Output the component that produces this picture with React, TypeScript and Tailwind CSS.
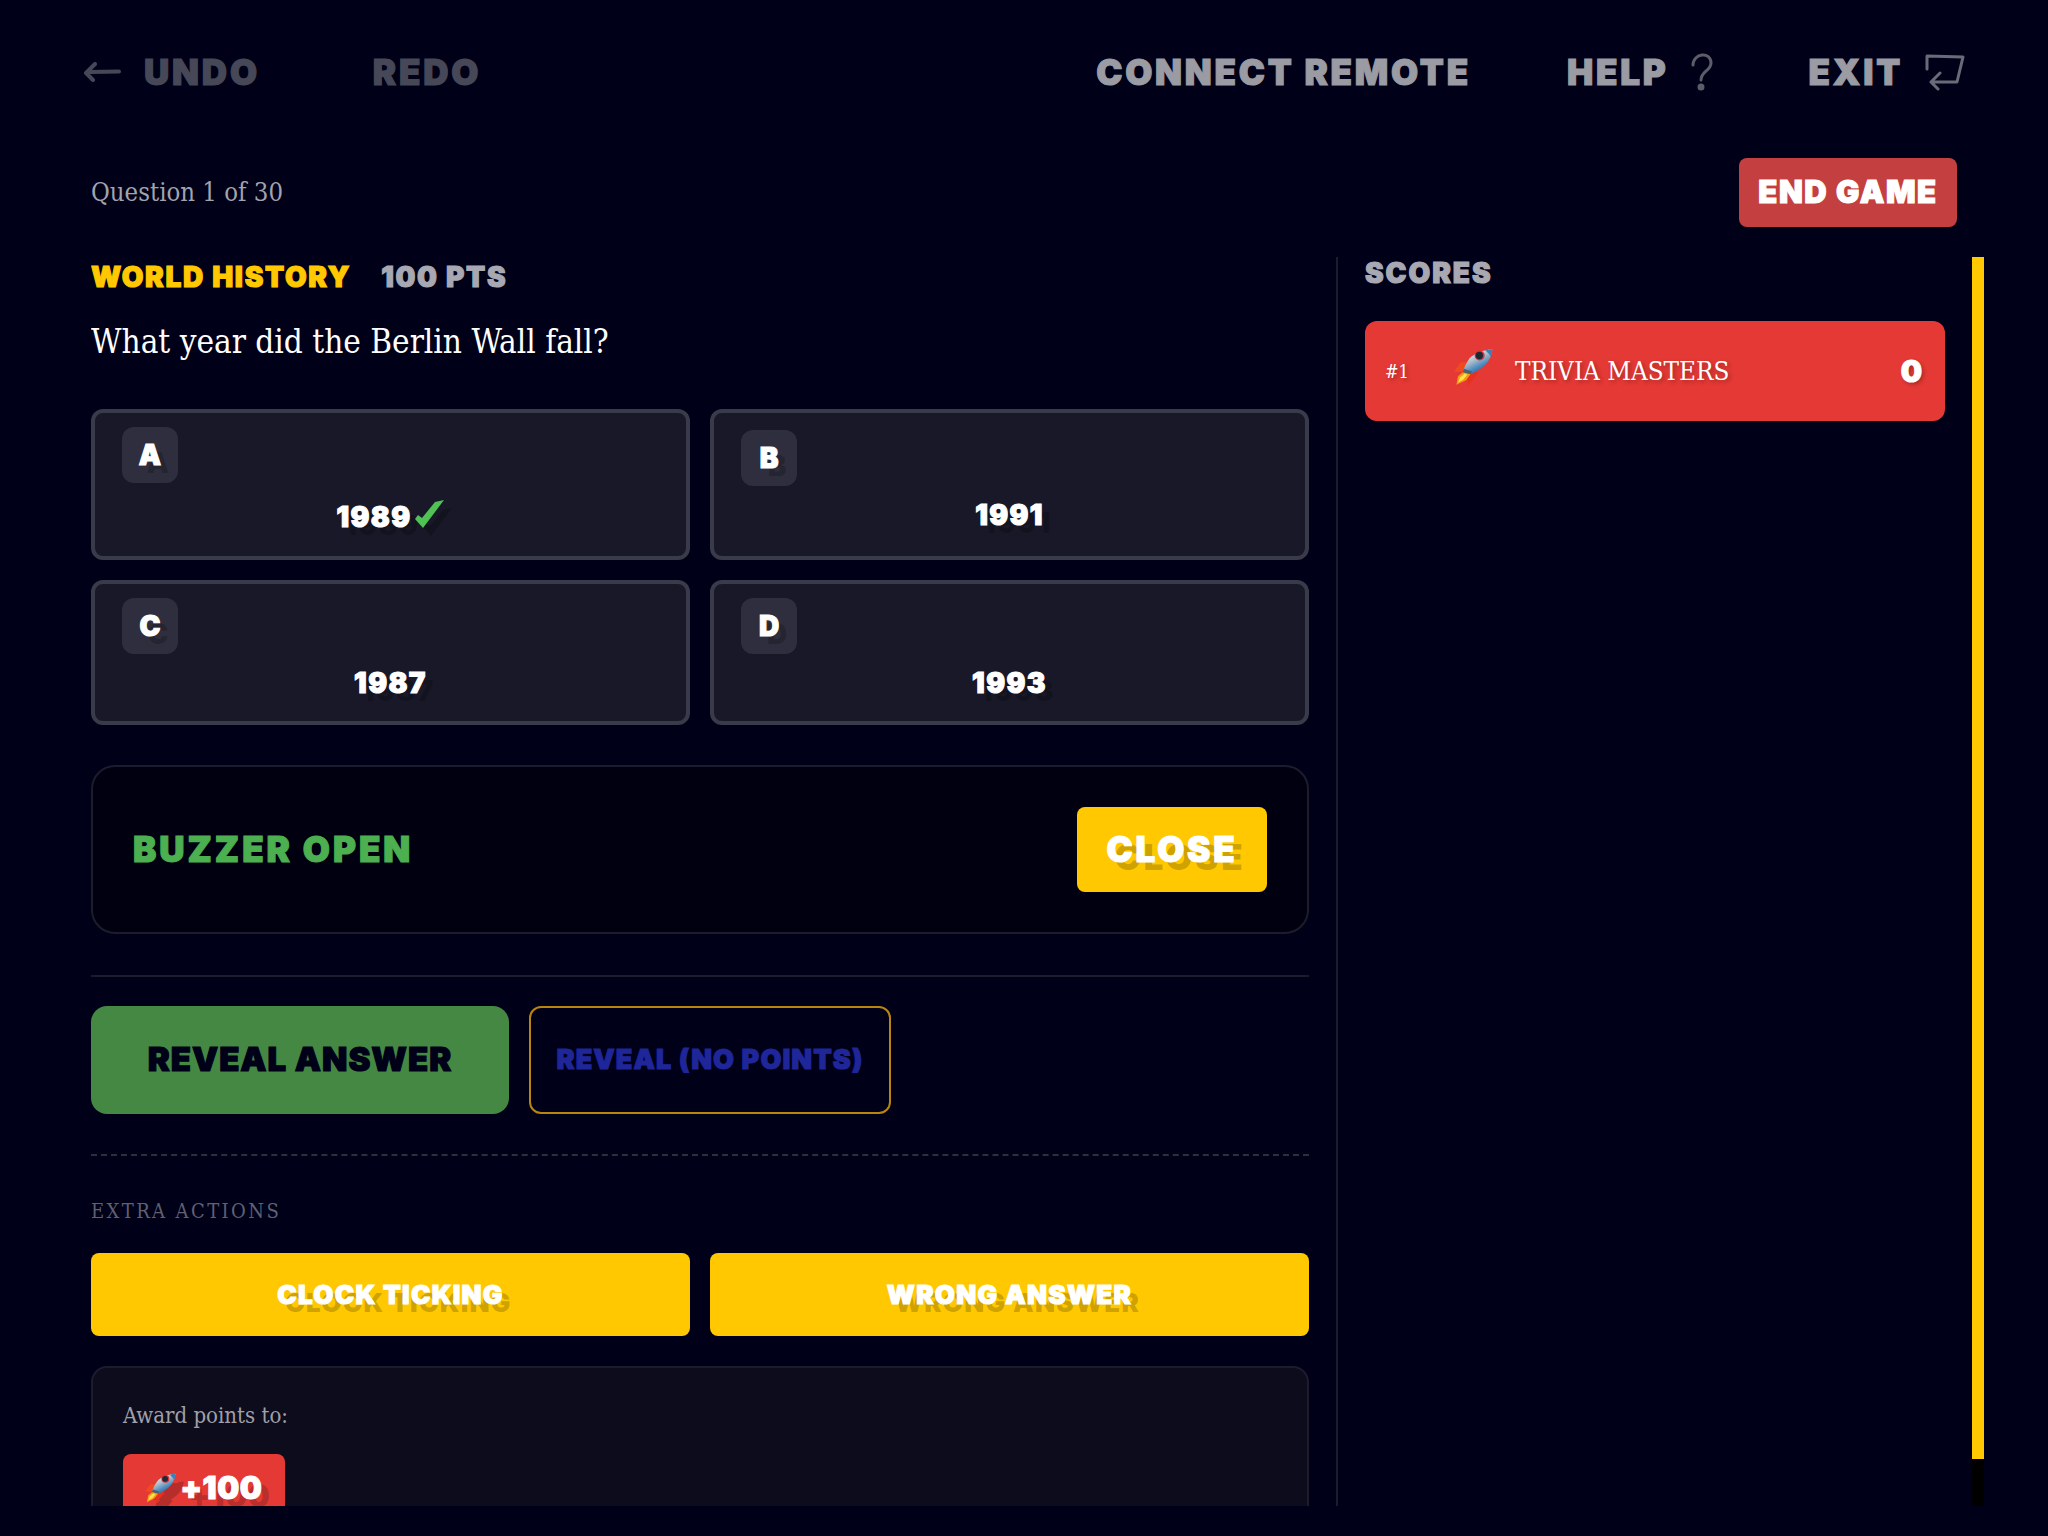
import React from "react";

const disp = "font-['Inter','Liberation_Sans',sans-serif] font-black [-webkit-text-stroke:1.1px_currentColor]";
const slab = "font-['DejaVu_Serif','Liberation_Serif',serif] [font-stretch:condensed]";
const softShadow = "[text-shadow:8px_8px_0_rgba(0,0,0,0.2)]";

function Rocket({ className }: { className: string }) {
  return (
    <svg viewBox="0 0 117 113" className={className}>
      <defs>
        <linearGradient id="rb" x1="0.25" y1="0.1" x2="0.75" y2="0.9">
          <stop offset="0" stopColor="#eef1f3" />
          <stop offset="0.4" stopColor="#a9bccb" />
          <stop offset="0.7" stopColor="#4f8cc0" />
          <stop offset="1" stopColor="#235f99" />
        </linearGradient>
      </defs>
      <path d="M0 70 L20 42 L45 42 L30 72 Z" fill="#f04a20" />
      <path d="M42 112 L74 74 L54 66 L40 90 Z" fill="#e8321f" />
      <path d="M7 110 L12 84 L32 68 L54 72 L36 96 Z" fill="#f59a14" />
      <path d="M12 104 L18 88 L32 76 L40 80 L28 94 Z" fill="#ffe04a" />
      <path d="M115 3 C90 4 60 16 47 30 C38 42 30 58 27 70 L52 76 C70 72 95 50 102 40 C110 28 114 14 115 3 Z" fill="url(#rb)" />
      <path d="M30 62 L54 70 L50 78 L26 72 Z" fill="#51606c" />
      <circle cx="77" cy="22" r="15" fill="#d8323a" />
      <circle cx="76" cy="22" r="11" fill="#1e2a33" />
      <path d="M115 3 C108 3 100 5 94 7 C100 12 106 18 110 25 C113 18 115 10 115 3 Z" fill="#3d80b8" />
    </svg>
  );
}

function Check() {
  return (
    <svg viewBox="0 0 31 30" className="w-[31px] h-[30px] ml-[2px] -mt-[6px] drop-shadow-[8px_8px_0_rgba(0,0,0,0.2)]">
      <path d="M1 20 L9 29 L30 1 L21 3 L8 19 L4 16 Z" fill="#4fc253" />
    </svg>
  );
}

function Answer({ l, t, check, className }: { l: string; t: string; check?: boolean; className: string }) {
  return (
    <div className={`flex flex-col border-4 border-[#3a3b4a] bg-[#181828] rounded-xl px-[27px] text-white ${className}`}>
      <div className="w-14 h-14 rounded-xl bg-[#2e2e3e] flex items-center justify-center">
        <span className={`${disp} text-[28px] leading-none ${softShadow}`}>{l}</span>
      </div>
      <div className={`${disp} text-[28px] tracking-[0.05em] leading-[34px] ${check ? "mt-[17px]" : "mt-[12px]"} text-center flex justify-center items-center ${softShadow}`}>
        <span>{t}</span>
        {check && <Check />}
      </div>
    </div>
  );
}

function Yellow({ children, className }: { children: React.ReactNode; className: string }) {
  return (
    <button className={`bg-[#ffc800] rounded-lg text-white ${disp} ${softShadow} ${className}`}>{children}</button>
  );
}

export default function App() {
  return (
    <div className={`w-[2048px] h-[1536px] bg-[#000018] overflow-hidden pl-[84px] pt-[50px] ${slab}`}>
      <header className={`h-11 mr-[83px] flex items-center ${disp} text-[35px] tracking-[0.08em] leading-none`}>
        <svg viewBox="0 0 38 20" className="w-[38px] h-5 mr-[22px] text-[#474857]" fill="none" stroke="currentColor" strokeWidth="4" strokeLinecap="round" strokeLinejoin="round">
          <path d="M6 10 L35 9.5 M11 2 L2 11 L9 18" />
        </svg>
        <span className="text-[#474857]">UNDO</span>
        <span className="text-[#474857] ml-[113px]">REDO</span>
        <span className="text-[#9a9ba3] ml-auto">CONNECT REMOTE</span>
        <span className="text-[#9a9ba3] ml-[96px]">HELP</span>
        <svg viewBox="0 0 22 38" className="w-[22px] h-[38px] ml-[22px] text-[#5c5d68]" fill="none" stroke="currentColor" strokeWidth="3" strokeLinecap="round" strokeLinejoin="round">
          <path d="M2 12 C2 0 20 -2 20 10 C20 18 10 18 10 27" />
          <circle cx="10" cy="34" r="2" fill="currentColor" />
        </svg>
        <span className="text-[#9a9ba3] ml-[96px]">EXIT</span>
        <svg viewBox="0 0 40 38" className="w-10 h-[38px] ml-[22px] text-[#6a6b78]" fill="none" stroke="currentColor" strokeWidth="3" strokeLinecap="round" strokeLinejoin="round">
          <path d="M2 16 L2 3 L38 4 L32 29 L7 29 M15 20 L6 29 L13 36" />
        </svg>
      </header>

      <div className="mt-[64px] ml-[7px] mr-[91px] h-[69px] flex items-center justify-between">
        <span className="text-[25.5px] text-[#a2a3ad]">Question 1 of 30</span>
        <button className={`w-[218px] h-[69px] rounded-lg bg-[#c44040] text-white ${disp} text-[31px] tracking-[0.05em]`}>END GAME</button>
      </div>

      <main className="mt-[30px] ml-[7px] h-[1249px] flex">
        <section className="w-[1218px] shrink-0 overflow-hidden">
          <div className={`${disp} text-[28px] tracking-[0.06em] leading-10 flex gap-[30px]`}>
            <span className="text-[#ffc800]">WORLD HISTORY</span>
            <span className="text-[#a8a8b2]">100 PTS</span>
          </div>
          <h1 className="text-[33px] leading-[44px] text-white mt-[23px]">What year did the Berlin Wall fall?</h1>
          <div className="mt-[45px] grid grid-cols-2 gap-x-5 gap-y-5">
            <Answer l="A" t="1989" check className="h-[151px] pt-[14px]" />
            <Answer l="B" t="1991" className="h-[151px] pt-[17px]" />
            <Answer l="C" t="1987" className="h-[145px] pt-[14px]" />
            <Answer l="D" t="1993" className="h-[145px] pt-[14px]" />
          </div>
          <div className="mt-[40px] h-[169px] border-2 border-[#1c1c2c] rounded-3xl bg-[#000010] px-10 flex items-center justify-between">
            <span className={`${disp} text-[35px] tracking-[0.085em] text-[#4caf50]`}>BUZZER OPEN</span>
            <Yellow className="w-[190px] h-[85px] text-[35px] tracking-[0.08em]">CLOSE</Yellow>
          </div>
          <div className="mt-[41px] border-t-2 border-[#1c1c2c]" />
          <div className="mt-[29px] flex gap-5">
            <button className={`w-[418px] h-[108px] rounded-2xl bg-[#458844] text-[#000018] ${disp} text-[33px] tracking-[0.03em]`}>REVEAL ANSWER</button>
            <button className={`w-[362px] h-[108px] rounded-xl border-2 border-[#b8860f] text-[#1f2699] ${disp} text-[27px] tracking-[0.04em]`}>REVEAL (NO POINTS)</button>
          </div>
          <div className="mt-[40px] border-t-2 border-dashed border-[#2e2e3e]" />
          <div className="mt-[41px] text-[20px] leading-7 tracking-[2.4px] text-[#5f6072]">EXTRA ACTIONS</div>
          <div className="mt-[28px] grid grid-cols-2 gap-5">
            <Yellow className="h-[83px] text-[26px] tracking-[0.05em]">CLOCK TICKING</Yellow>
            <Yellow className="h-[83px] text-[26px] tracking-[0.05em]">WRONG ANSWER</Yellow>
          </div>
          <div className="mt-[30px] h-[300px] border-2 border-[#1c1c2c] rounded-2xl bg-[#0c0c1c] px-[30px] pt-[32px]">
            <div className="text-[22px] leading-8 text-[#a0a0a8]">Award points to:</div>
            <button className={`mt-[22px] w-[162px] h-[68px] rounded-lg bg-[#e53935] text-white ${disp} text-[31px] tracking-[0.02em] flex items-center justify-center gap-1 ${softShadow}`}>
              <Rocket className="w-[31px] h-[30px] drop-shadow-[8px_8px_0_rgba(0,0,0,0.2)]" />
              <span>+100</span>
            </button>
          </div>
        </section>
        <div className="ml-[27px] w-0.5 shrink-0 bg-[#1c1c2c]" />
        <aside className="ml-[27px] w-[580px] shrink-0">
          <h2 className={`${disp} text-[28px] tracking-[0.07em] leading-8 text-[#a8a8b2]`}>SCORES</h2>
          <div className="mt-[32px] h-[100px] rounded-xl bg-[#e53935] text-white flex items-center pl-5 pr-[23px] [text-shadow:2px_2px_4px_rgba(0,0,0,0.3)]">
            <span className="text-[18px] w-[71px]">#1</span>
            <Rocket className="w-[39px] h-[38px] -mt-2 -ml-[2px]" />
            <span className="text-[25.8px] ml-[22px]">TRIVIA MASTERS</span>
            <span className={`${disp} text-[30px] ml-auto`}>0</span>
          </div>
        </aside>
        <div className="ml-[27px] w-3 shrink-0 bg-black flex">
          <div className="w-3 h-[1202px] bg-[#ffc800]" />
        </div>
      </main>
    </div>
  );
}
